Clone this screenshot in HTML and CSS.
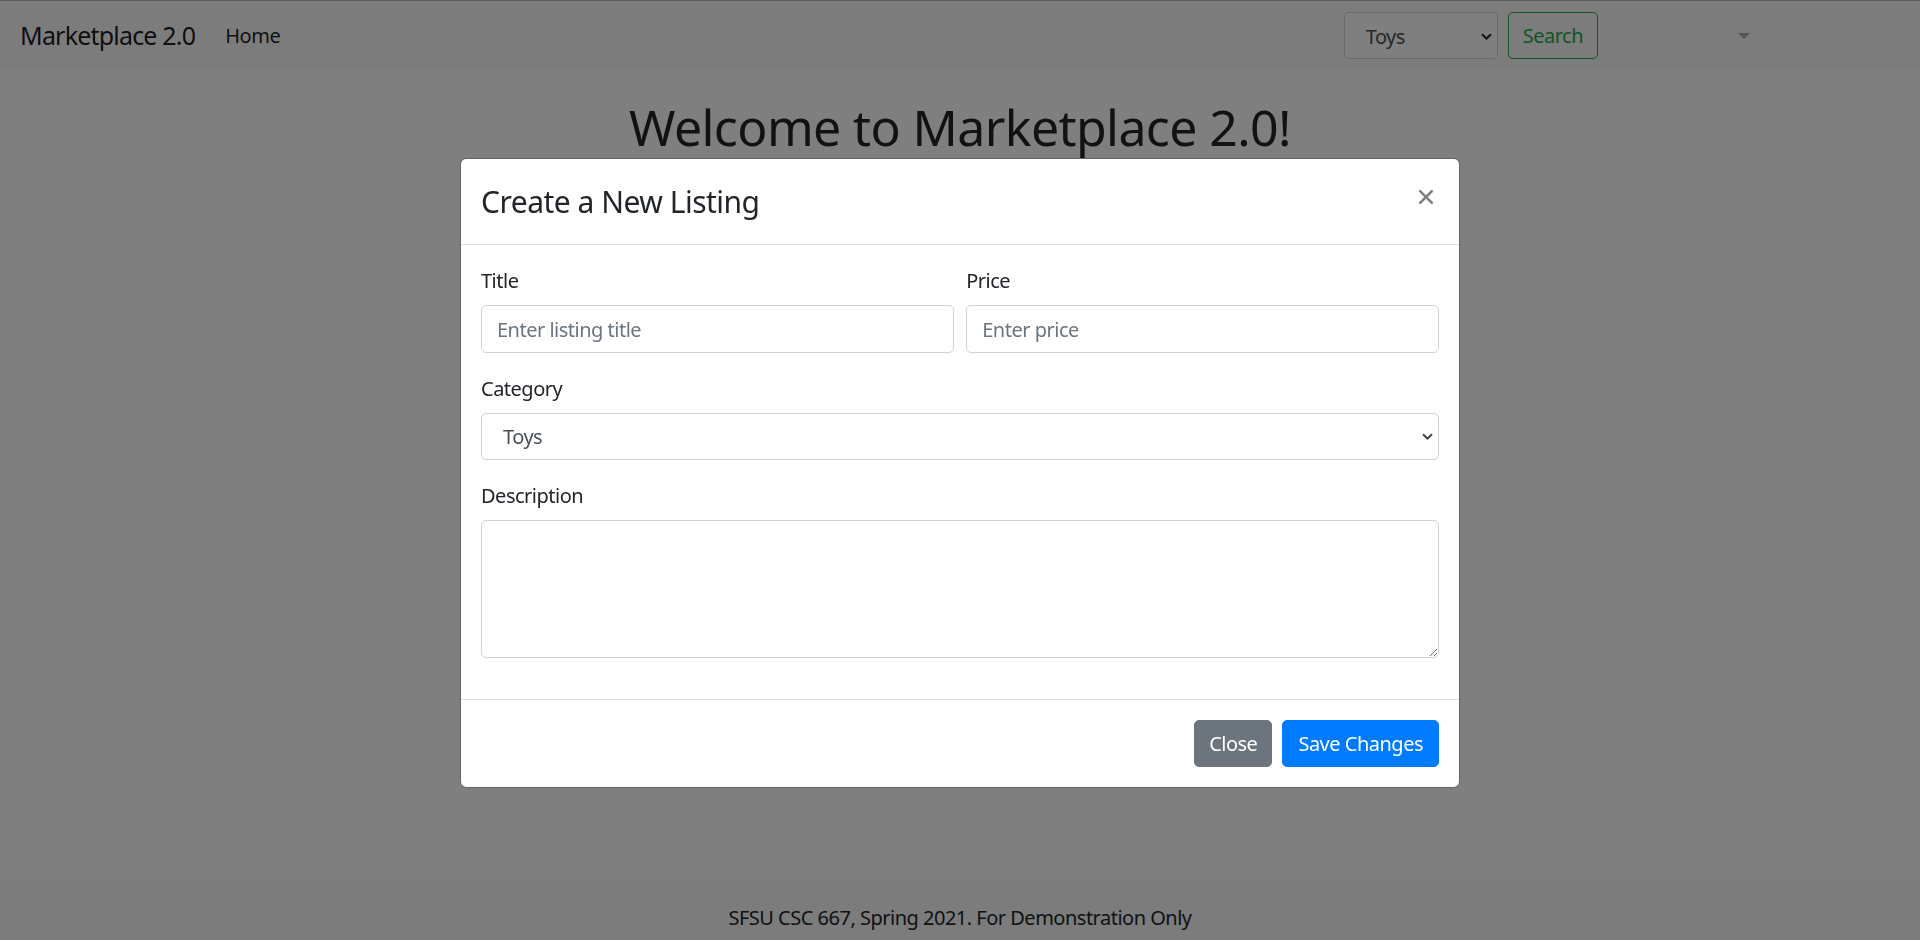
FILE: index.html
```html
<!DOCTYPE html>
<html lang="en">
<head>
<meta charset="utf-8">
<title>Marketplace 2.0</title>
<link rel="stylesheet" href="styles.css">
</head>
<body>
<div class="page">
  <nav class="navbar">
    <a class="brand" href="#">Marketplace 2.0</a>
    <ul class="nav-links">
      <li><a class="nav-link active" href="#">Home</a></li>
    </ul>
    <form class="search-form">
      <div class="select-wrap nav-select">
        <select class="form-control"><option>Toys</option></select>
        <svg class="chev" width="11" height="7" viewBox="0 0 11 7"><path d="M1 1.2 L5.5 5.5 L10 1.2" fill="none" stroke="#222" stroke-width="2"/></svg>
      </div>
      <button type="button" class="btn btn-outline-success">Search</button>
    </form>
    <div class="user-dropdown"><a class="nav-link dropdown-toggle" href="#"></a></div>
  </nav>
  <main class="main">
    <h1 class="welcome">Welcome to Marketplace 2.0!</h1>
  </main>
  <footer class="footer">SFSU CSC 667, Spring 2021. For Demonstration Only</footer>
</div>

<div class="backdrop"></div>

<div class="modal">
  <div class="modal-dialog">
    <div class="modal-header">
      <h4 class="modal-title">Create a New Listing</h4>
      <button type="button" class="close-btn" aria-label="Close">
        <svg width="14" height="14" viewBox="0 0 14 14"><path d="M1.3 1.3 L12.7 12.7 M12.7 1.3 L1.3 12.7" stroke="#000" stroke-width="2.6" stroke-linecap="square" fill="none"/></svg>
      </button>
    </div>
    <div class="modal-body">
      <div class="form-row">
        <div class="form-group col">
          <label class="label">Title</label>
          <input class="form-control" type="text" placeholder="Enter listing title">
        </div>
        <div class="form-group col">
          <label class="label">Price</label>
          <input class="form-control" type="text" placeholder="Enter price">
        </div>
      </div>
      <div class="form-group">
        <label class="label">Category</label>
        <div class="select-wrap">
          <select class="form-control"><option>Toys</option></select>
          <svg class="chev" width="11" height="7" viewBox="0 0 11 7"><path d="M1 1.2 L5.5 5.5 L10 1.2" fill="none" stroke="#444" stroke-width="2"/></svg>
        </div>
      </div>
      <div class="form-group">
        <label class="label">Description</label>
        <textarea class="form-control textarea" rows="4"></textarea>
      </div>
    </div>
    <div class="modal-footer">
      <button type="button" class="btn btn-secondary">Close</button>
      <button type="button" class="btn btn-primary">Save Changes</button>
    </div>
  </div>
</div>
</body>
</html>
```
FILE: styles.css
```css
* { box-sizing: border-box; }
html, body { margin: 0; padding: 0; height: 100%; }
body {
  font-family: "Noto Sans", "Open Sans", sans-serif;
  font-size: 20px;
  line-height: 1.5;
  letter-spacing: -0.5px;
  color: #212529;
  background: #fff;
  overflow: hidden;
}
.page {
  display: flex;
  flex-direction: column;
  height: 940px;
}
.navbar {
  display: flex;
  align-items: center;
  height: 70px;
  padding: 10px 20px;
  background: #f8f9fa;
  border-top: 1px solid #b4b4b4;
}
.brand {
  font-size: 25px;
  line-height: 37.5px;
  padding: 6px 0;
  margin-right: 20px;
  color: rgba(0,0,0,.9);
  text-decoration: none;
  letter-spacing: -0.8px;
}
.nav-links {
  list-style: none;
  margin: 0 auto 0 0;
  padding: 0;
  display: flex;
}
.nav-link {
  display: block;
  padding: 10px;
  color: rgba(0,0,0,.5);
  text-decoration: none;
}
.nav-link.active { color: rgba(0,0,0,.9); }
.search-form {
  display: flex;
  align-items: center;
}
.select-wrap { position: relative; }
.nav-select { width: 154px; margin-right: 10px; }
.chev {
  position: absolute;
  right: 6px;
  top: 50%;
  margin-top: -3px;
  pointer-events: none;
  display: block;
}
.form-control {
  display: block;
  width: 100%;
  height: 47.5px;
  padding: 8.5px 15px 6.5px;
  font-family: inherit;
  font-size: 20px;
  line-height: 1.5;
  letter-spacing: -0.5px;
  color: #495057;
  background: #fff;
  border: 1px solid #ced4da;
  border-radius: 5px;
  outline: none;
}
select.form-control {
  -webkit-appearance: none;
  appearance: none;
  padding-left: 21px;
  color: #495057;
}
.form-control::placeholder { color: #6c757d; opacity: 1; }
.textarea {
  height: 137.5px;
  resize: vertical;
}
.btn {
  display: inline-block;
  font-family: inherit;
  font-size: 20px;
  line-height: 1.5;
  letter-spacing: -0.5px;
  padding: 8px 15px 7px;
  border: 1px solid transparent;
  border-radius: 5px;
  background: transparent;
  cursor: pointer;
}
.btn-outline-success {
  color: #28a745;
  border-color: #28a745;
  padding-left: 14px;
  padding-right: 14px;
}
.btn-secondary { background: #6c757d; border-color: #6c757d; color: #fff; padding-left: 14px; padding-right: 14px; }
.btn-primary { background: #007bff; border-color: #007bff; color: #fff; }
.user-dropdown {
  margin-left: 125px;
  margin-right: 140px;
}
.dropdown-toggle {
  color: rgba(0,0,0,.3);
  display: flex;
  align-items: center;
  height: 50px;
}
.dropdown-toggle::after {
  content: "";
  display: inline-block;
  margin-left: 5px;
  border-top: 6px solid;
  border-left: 6px solid transparent;
  border-right: 6px solid transparent;
  border-bottom: 0;
}
.main {
  flex: 1;
  text-align: center;
}
.welcome {
  margin: 27px 0 0;
  font-size: 50px;
  font-weight: 400;
  line-height: 60px;
  letter-spacing: -0.6px;
}
.footer {
  height: 59px;
  padding-top: 22px;
  background: #f8f9fa;
  text-align: center;
  line-height: 30px;
}
.backdrop {
  position: fixed;
  inset: 0;
  background: rgba(0,0,0,.5);
}
.modal {
  position: fixed;
  inset: 0;
  display: flex;
  justify-content: center;
  align-items: flex-start;
}
.modal-dialog {
  width: 1000px;
  margin-top: 158px;
  background: #fff;
  border: 1px solid rgba(0,0,0,.2);
  border-radius: 6px;
  background-clip: padding-box;
}
.modal-header {
  display: flex;
  align-items: flex-start;
  padding: 20px;
  border-bottom: 1px solid #dee2e6;
}
.modal-title {
  margin: 0;
  font-size: 30px;
  font-weight: 400;
  line-height: 45px;
  letter-spacing: -0.5px;
}
.close-btn {
  margin: 0 0 0 auto;
  padding: 11px 6px;
  border: 0;
  background: transparent;
  opacity: .5;
  display: flex;
  cursor: pointer;
}
.modal-body {
  padding: 20px 20px 21px;
}
.form-row {
  display: flex;
  margin: 0 -6.25px;
}
.col {
  flex: 1;
  padding: 0 6.25px;
}
.form-group { margin-bottom: 20px; }
.label {
  display: block;
  padding-top: 1px;
  margin-bottom: 9px;
  line-height: 30px;
}
.modal-footer {
  display: flex;
  justify-content: flex-end;
  align-items: center;
  padding: 15px;
  border-top: 1px solid #dee2e6;
}
.modal-footer > .btn { margin: 5px; }
```
